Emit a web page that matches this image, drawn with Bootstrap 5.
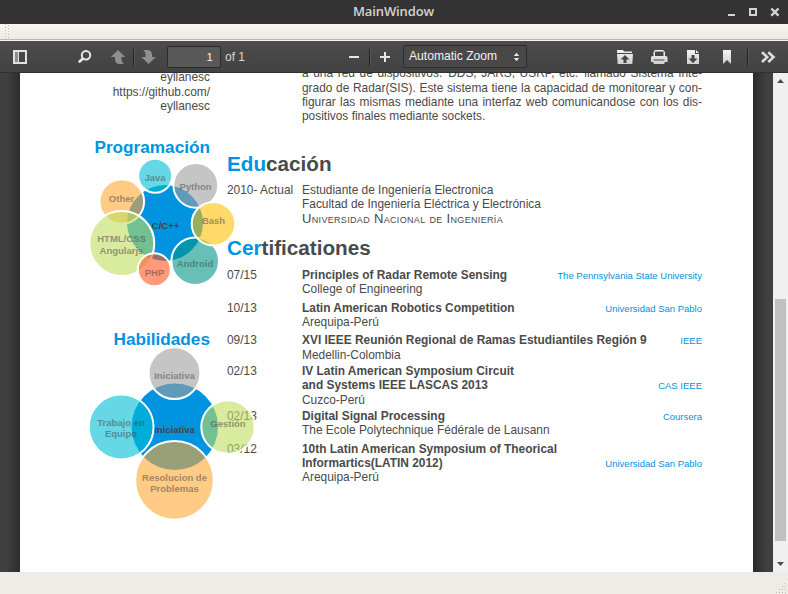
<!DOCTYPE html>
<html lang="es">
<head>
<meta charset="utf-8">
<meta name="viewport" content="width=device-width, initial-scale=1">
<title>MainWindow</title>
<link href="https://cdn.jsdelivr.net/npm/bootstrap@5.3.0/dist/css/bootstrap.min.css" rel="stylesheet">
<style>
  body { font-family: "Liberation Sans", Arial, sans-serif; width: 788px; height: 594px; }
  .win-title { height: 24px; background: #333; color: #d3d3d3; font: 600 13px/23px "Open Sans", "Noto Sans", sans-serif; letter-spacing: -.1px; }
  .win-controls { width: 60px; }
  .win-side { width: 59px; }
  .dock-strip { height: 15px; background: linear-gradient(#f9f6f2, #edeae3); }
  .dock-edge { height: 2px; background: #b9b7ae; border-bottom: 1px solid #f6f4f0; }
  .pdf-bar { height: 32px; background: linear-gradient(#4c4c4c, #424242); border-bottom: 1px solid #303030; color: #d9d9d9; font-size: 12px; }
  .pdf-bar svg { display: block; flex-shrink: 0; }
  .page-input { width: 54px; height: 22px; border: 1px solid #2b2b2b; border-radius: 2px; background: #585858; color: #f2f2f2; font-size: 11.5px; line-height: 21px; padding-right: 7px; }
  .page-count { width: 123px; }
  .zoom-select { width: 124px; height: 23px; border: 1px solid #2c2c2c; border-radius: 2px; background: #484848; color: #f2f2f2; font-size: 12.1px; line-height: 21px; padding: 0 6px 0 5px; }
  .viewer { height: 499px; background: #3d3d3d; }
  .gutter-l { width: 20px; background: linear-gradient(90deg, #404040 30%, #2c2c2c); }
  .gutter-r { width: 20px; background: linear-gradient(90deg, #2a2a2a, #404040 70%); }
  .sheet { width: 733px; background: #fff; color: #4a4a4a; font-size: 11.91px; line-height: 14.2px; }
  .side-col { width: 190px; z-index: 1; }
  .side-links { margin-top: -3px; height: 66px; line-height: 14.5px; }
  .side-head { color: #0093e0; font-weight: 700; font-size: 17.2px; line-height: 22px; }
  .bubbles { display: block; margin-left: 60px; overflow: visible; }
  .bubbles text { font: 700 9.5px "Liberation Sans", Arial, sans-serif; text-anchor: middle; fill: #444; }
  .bubbles .ring { stroke: #fff; stroke-width: 2; fill-opacity: .6; }
  .bubbles .faded { opacity: .5; }
  .main-col { width: 475px; margin-left: 17px; margin-top: -6.6px; }
  .indent { margin-left: 75px; }
  .full-line { text-align: justify; text-align-last: justify; white-space: nowrap; }
  .summary { height: 83.6px; }
  .main-head { font-weight: 700; font-size: 20.7px; line-height: 28px; }
  .main-head span, .org { color: #0093e0; }
  .entry { display: grid; grid-template-columns: 75px 1fr; white-space: nowrap; align-content: start; }
  .edu { margin-top: 5px; height: 51px; }
  .univ { font-variant: small-caps; font-size: 13px; letter-spacing: .33px; margin-top: 1px; }
  .certs { display: grid; margin-top: 6px; grid-template-rows: 33px 32px 31px 45px 33px 43px; }
  .place { padding-top: 1px; }
  .org { font-size: 9.5px; padding-top: .6px; margin-bottom: -.6px; }
  .scroll-rail { width: 15px; background: #f0f0f0; }
  .scroll-space { height: 212px; }
  .scroll-thumb { width: 11px; height: 242px; background: #c1c1c1; }
  .status-strip { height: 22px; background: #efebe7; }
</style>
</head>
<body class="overflow-hidden bg-white">
<header class="win-title d-flex">
  <div class="win-side"></div>
  <div class="flex-grow-1 text-center">MainWindow</div>
  <svg class="win-controls" height="24" viewBox="728 0 60 24" fill="none" stroke="#d3d3d3" stroke-width="2">
    <path d="M727 15h8M750 9h6v6h-6z"/><path stroke-width="2.400" d="M771.300 8.500l7.200 7.200M778.500 8.500l-7.200 7.200"/>
  </svg>
</header>
<div class="dock-strip">
  <svg class="d-block" width="12" height="15" stroke="#bcb8b0" stroke-dasharray="1 2"><path d="M5.500 0V15M8.500 1V15"/></svg>
</div>
<div class="dock-edge"></div>

<nav class="pdf-bar d-flex align-items-center">
  <svg width="167" height="31" viewBox="0 41 167 31">
    <defs><linearGradient id="ico" x1="0" y1="0" x2="0" y2="1"><stop offset="0" stop-color="#f4f4f4"/><stop offset="1" stop-color="#cfcfcf"/></linearGradient></defs>
    <path fill="#e2e2e2" fill-rule="evenodd" d="M13 50h14v14H13zM15 52v10h3V52zM19 52v10h6V52z"/>
    <path fill="#8d8d8d" d="M15 52h3v10h-3z"/>
    <circle cx="86" cy="55.300" r="4.200" fill="none" stroke="#e8e8e8" stroke-width="2"/>
    <path d="M83 58.500L78.800 62.300" stroke="#e8e8e8" stroke-width="2.600"/>
    <path fill="#8f8f8f" d="M118 50l7.200 7H121.500v3q0 2.500 2.500 4h-4q-5 0-5-5v-2H110.800z"/>
    <path fill="#8f8f8f" d="M148.500 64l7.300-7H152v-2q0-5-5-5h-4q2.500 1.500 2.500 4v3H141.500z"/>
    <path stroke="#222" d="M133.500 49v17"/><path stroke="#565656" d="M134.500 49v17"/>
  </svg>
  <div class="page-input text-end">1</div>
  <div class="page-count ps-1">of 1</div>
  <svg width="59" height="31" viewBox="344 41 59 31">
    <path stroke="#e6e6e6" stroke-width="2" d="M349 57h10M380 57h10M385 52v10"/>
    <path stroke="#222" d="M369.500 49v17"/><path stroke="#565656" d="M370.500 49v17"/>
  </svg>
  <div class="zoom-select d-flex justify-content-between align-items-center">
    <span>Automatic Zoom</span>
    <svg width="7" height="10" fill="#e8e8e8"><path d="M.8 4L3.500 .8 6.200 4zM.8 6h5.400L3.500 9.200z"/></svg>
  </div>
  <svg class="ms-auto" width="176" height="31" viewBox="612 41 176 31">
    <path fill="url(#ico)" fill-rule="evenodd" d="M617 50h6l1 1.500h8V53h-15zM617 54h16l-.7 10h-14.600zM625 55l-4.500 4.500h3V63h3v-3.500h3z"/>
    <path fill="url(#ico)" fill-rule="evenodd" d="M655 50h8l2 2v4h1q1.500 0 1.500 1.500V62H665l-1 2h-10l-1-2h-2v-4.500q0-1.500 1.500-1.500h1v-4zM655 51.500v4.500h8.500v-4.500zM653.500 59.500v1h11v-1z"/>
    <path fill="url(#ico)" fill-rule="evenodd" d="M687 50h8v4h4v10h-12zM696 50l3 3h-3zM691.500 55v3.500h-3L693 63l4.500-4.500h-3V55z"/>
    <path fill="url(#ico)" d="M723 50h8v14l-4-4-4 4z"/>
    <path stroke="#222" d="M747.500 49v17"/><path stroke="#565656" d="M748.500 49v17"/>
    <path fill="none" stroke="#dedede" stroke-width="2.600" d="M762 52.200l5.200 4.900-5.200 4.900M768.300 52.200l5.200 4.900-5.200 4.900"/>
  </svg>
</nav>

<main class="viewer d-flex overflow-hidden">
  <div class="gutter-l flex-shrink-0"></div>
  <article class="sheet d-flex flex-shrink-0">
    <aside class="side-col flex-shrink-0">
      <div class="side-links text-end">eyllanesc<br>https://github.com/<br>eyllanesc</div>
      <div class="side-head text-end">Programación</div>
      <svg class="bubbles" width="130" height="170" viewBox="80 158 130 170">
        <circle cx="165" cy="223" r="38" fill="#0093e0"/>
        <text x="165.500" y="229">C/C++</text>
        <circle class="ring" cx="195.800" cy="185.300" r="22.400" fill="#9e9e9e"/>
        <circle class="ring" cx="155.200" cy="175.700" r="17" fill="#00bcd4"/>
        <circle class="ring" cx="121.800" cy="201.500" r="22.300" fill="#ffa834"/>
        <circle class="ring" cx="121.800" cy="243.500" r="32.500" fill="#bfde5e"/>
        <circle class="ring" cx="154.300" cy="269.800" r="16.500" fill="#ff5722"/>
        <circle class="ring" cx="195.200" cy="261.200" r="23.800" fill="#009688"/>
        <circle class="ring" cx="213.500" cy="223.700" r="21.800" fill="#ffc107"/>
        <g class="faded">
          <text x="155" y="181">Java</text><text x="195.500" y="190">Python</text>
          <text x="121.500" y="202">Other</text><text x="213.500" y="224">Bash</text>
          <text x="121.500" y="242">HTML/CSS</text><text x="121.500" y="254">Angularjs</text>
          <text x="154.500" y="276">PHP</text><text x="195" y="267">Android</text>
        </g>
      </svg>
      <div class="side-head text-end">Habilidades</div>
      <svg class="bubbles" width="130" height="180" viewBox="80 350 130 180">
        <circle cx="174.800" cy="426.800" r="43.300" fill="#0093e0"/>
        <text x="174.500" y="433">Iniciativa</text>
        <circle class="ring" cx="174.500" cy="373.200" r="25.900" fill="#9e9e9e"/>
        <circle class="ring" cx="121.200" cy="427" r="32.400" fill="#00bcd4"/>
        <circle class="ring" cx="174.500" cy="480.400" r="39.300" fill="#ffa834"/>
        <circle class="ring" cx="228" cy="427" r="26.700" fill="#bfde5e"/>
        <g class="faded">
          <text x="174.500" y="379">Iniciativa</text>
          <text x="121" y="426">Trabajo en</text><text x="121" y="437">Equipo</text>
          <text x="174.500" y="481">Resolucion de</text><text x="174.500" y="492">Problemas</text>
          <text x="228" y="427">Gestión</text>
        </g>
      </svg>
    </aside>
    <section class="main-col">
      <div class="summary indent">
        <div class="full-line">a una red de dispositivos.&ensp;DDS, JARS, USRP, etc.&ensp;llamado Sistema Inte-</div>
        <div class="full-line">grado de Radar(SIS). Este sistema tiene la capacidad de monitorear y con-</div>
        <div class="full-line">figurar las mismas mediante una interfaz web comunicandose con los dis-</div>
        <div>positivos finales mediante sockets.</div>
      </div>
      <div class="main-head"><span>Edu</span>cación</div>
      <div class="entry edu">
        <div>2010- Actual</div>
        <div>Estudiante de Ingeniería Electronica<br>Facultad de Ingeniería Eléctrica y Electrónica
          <div class="univ">Universidad Nacional de Ingeniería</div></div>
      </div>
      <div class="main-head"><span>Cer</span>tificationes</div>
      <div class="certs">
        <div class="entry"><div>07/15</div><div><div class="d-flex justify-content-between"><b>Principles of Radar Remote Sensing</b><span class="org">The Pennsylvania State University</span></div>College of Engineering</div></div>
        <div class="entry"><div>10/13</div><div><div class="d-flex justify-content-between"><b>Latin American Robotics Competition</b><span class="org">Universidad San Pablo</span></div>Arequipa-Perú</div></div>
        <div class="entry"><div>09/13</div><div><div class="d-flex justify-content-between"><b>XVI IEEE Reunión Regional de Ramas Estudiantiles Región 9</b><span class="org">IEEE</span></div><div class="place">Medellin-Colombia</div></div></div>
        <div class="entry"><div>02/13</div><div><b>IV Latin American Symposium Circuit</b><div class="d-flex justify-content-between"><b>and Systems IEEE LASCAS 2013</b><span class="org">CAS IEEE</span></div><div class="place">Cuzco-Perú</div></div></div>
        <div class="entry"><div>02/13</div><div><div class="d-flex justify-content-between"><b>Digital Signal Processing</b><span class="org">Coursera</span></div>The Ecole Polytechnique Fédérale de Lausann</div></div>
        <div class="entry"><div>03/12</div><div><b>10th Latin American Symposium of Theorical</b><div class="d-flex justify-content-between"><b>Informartics(LATIN 2012)</b><span class="org">Universidad San Pablo</span></div>Arequipa-Perú</div></div>
      </div>
    </section>
  </article>
  <div class="gutter-r flex-shrink-0"></div>
  <div class="scroll-rail d-flex flex-column align-items-center flex-shrink-0">
    <svg class="flex-shrink-0" width="15" height="14" fill="#4d4d4d"><path d="M4 10h7L7.500 6z"/></svg>
    <div class="scroll-space flex-shrink-0"></div>
    <div class="scroll-thumb flex-shrink-0"></div>
    <svg class="mt-auto flex-shrink-0" width="15" height="14" fill="#4d4d4d"><path d="M4 4h7L7.500 8z"/></svg>
  </div>
</main>
<footer class="status-strip d-flex justify-content-end align-items-end">
  <svg width="14" height="14" stroke="#c3bcb5" stroke-dasharray="1 2"><path d="M2 12.500h11M5 9.500h8M8 6.500h5M11 3.500h2"/></svg>
</footer>
<script src="https://cdn.jsdelivr.net/npm/bootstrap@5.3.0/dist/js/bootstrap.bundle.min.js"></script>
</body>
</html>
